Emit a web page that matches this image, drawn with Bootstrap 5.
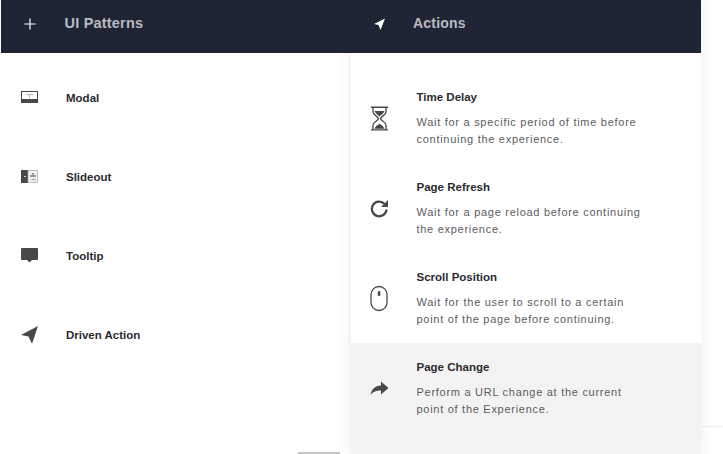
<!DOCTYPE html>
<html lang="en">
<head>
<meta charset="utf-8">
<title>Patterns and Actions</title>
<link href="https://cdn.jsdelivr.net/npm/bootstrap@5.3.0/dist/css/bootstrap.min.css" rel="stylesheet">
<style>
html,body{height:454px;overflow:hidden;background:#fff;}
body{font-family:"Liberation Sans",Arial,sans-serif;position:relative;}
.stage{height:454px;padding-left:1px;width:701px;}
.pane{width:350px;height:454px;}
.pane-right{box-shadow:-1px 0 0 #f2f2f2,0 0 18px rgba(0,0,0,.07);position:relative;z-index:1;}
.pane-left .pane-head{position:relative;z-index:2;}
.pane-head{height:53px;padding-bottom:6px;background:#1f2535;color:#b9bbc1;font-size:14.5px;font-weight:700;letter-spacing:.2px;}
.pane-head .ico{width:28px;height:14px;margin-left:21.5px;color:#fff;}
.pane-head .ttl{margin-left:14px;}
.pane-right .pane-head .ico{margin-left:21.5px;}
.pane-right .pane-head .ttl{margin-left:12.5px;font-size:14px;}
.plist{padding-top:5px;}
.pitem{height:79px;padding-left:20px;color:#2b2b2e;font-size:11.5px;font-weight:700;}
.pitem svg{width:17px;height:17px;color:#48484b;flex:none;}
.pitem span{margin-left:28px;margin-top:3px;}
.alist{padding-top:21px;}
.aitem{height:90px;padding-left:19px;}
.aitem.on{background:#f3f3f3;height:111px;margin-top:-1px;padding-top:1px;}
.aitem svg{width:20px;height:30px;color:#48484b;flex:none;margin-top:29px;}
.acopy{margin-left:26.5px;padding-top:17px;}
.acopy h6{margin:0 0 10px;font-size:11.5px;line-height:13px;font-weight:700;color:#2b2b2e;}
.acopy p{margin:0;font-size:11px;line-height:17px;color:#5c5c60;letter-spacing:.72px;}
.edge-tab{position:absolute;left:298px;bottom:0;width:42px;height:2px;background:#c4c4c4;}
.edge-line{position:absolute;left:701px;top:426px;width:22px;height:1px;background:#efefef;}
</style>
</head>
<body>
<div class="stage d-flex">
  <section class="pane pane-left">
    <header class="pane-head d-flex align-items-center">
      <svg class="ico" viewBox="0 0 28 14"><path d="M7 1.500v11M1.500 7h11" stroke="currentColor" stroke-width="1.200" fill="none"/></svg>
      <span class="ttl">UI Patterns</span>
    </header>
    <div class="plist">
      <div class="pitem d-flex align-items-center">
        <svg viewBox="0 0 17 17"><rect x=".5" y="2.500" width="16" height="11" fill="#fff" stroke="currentColor"/><rect y="10" width="17" height="4" fill="currentColor"/><path d="M5 5h7v1H5zM8 6h1v3H8z" fill="#b5b5b5"/></svg>
        <span>Modal</span>
      </div>
      <div class="pitem d-flex align-items-center">
        <svg viewBox="0 0 17 17"><rect y="2" width="7" height="13" fill="currentColor"/><rect x="7" y="2.500" width="9.500" height="12" fill="#efefef" stroke="#aaa" stroke-width=".7"/><path d="M9 7h6v2H9zM10.500 11h4v1h-4zM11 5h2v2h-2z" fill="#999"/><path d="M3 8h2v1H3z" fill="#ccc"/></svg>
        <span>Slideout</span>
      </div>
      <div class="pitem d-flex align-items-center">
        <svg viewBox="0 0 17 17"><path d="M1 1h15a1 1 0 0 1 1 1v10a1 1 0 0 1-1 1h-5l-2.500 2.500L6 13H1a1 1 0 0 1-1-1V2a1 1 0 0 1 1-1z" fill="currentColor"/></svg>
        <span>Tooltip</span>
      </div>
      <div class="pitem d-flex align-items-center">
        <svg viewBox="0 0 17 17"><path d="M17 0 0 9l7.500 1.500L11 18z" fill="currentColor"/></svg>
        <span>Driven Action</span>
      </div>
    </div>
  </section>
  <section class="pane pane-right">
    <header class="pane-head d-flex align-items-center">
      <svg class="ico" viewBox="0 0 28 14"><path d="M12 1.500 1 7l4.500 1L7.500 13z" fill="currentColor"/></svg>
      <span class="ttl">Actions</span>
    </header>
    <div class="alist">
      <div class="aitem d-flex">
        <svg viewBox="0 0 20 30"><g transform="translate(0 1.500) scale(1 1.080)"><path d="M1 2.500h17M1 23.500h17M3 3v4c0 2.500 5 4 5.500 6C8 15 3 16.500 3 19v4M16 3v4c0 2.500-5 4-5.500 6 .5 2 5.500 3.500 5.500 6v4" fill="none" stroke="currentColor" stroke-width="1.300"/><path d="M4.500 6h10c-.5 2-3.500 3.500-5 5C8 9.500 5 8 4.500 6zM4.500 22.500c1-2.500 3.500-4 5-4.500 1.500.5 4 2 5 4.500z" fill="currentColor"/></g></svg>
        <div class="acopy"><h6>Time Delay</h6><p>Wait for a specific period of time before<br>continuing the experience.</p></div>
      </div>
      <div class="aitem d-flex">
        <svg viewBox="0 0 20 30"><path d="M14.600 11A7.300 7.300 0 1 0 16.500 16.500" fill="none" stroke="currentColor" stroke-width="2.300"/><path d="M18 7V14H11z" fill="currentColor"/></svg>
        <div class="acopy"><h6>Page Refresh</h6><p>Wait for a page reload before continuing<br>the experience.</p></div>
      </div>
      <div class="aitem d-flex">
        <svg viewBox="0 0 20 30"><rect x="1" y="3.500" width="16" height="24" rx="8" fill="none" stroke="currentColor" stroke-width="1.300"/><rect x="7.800" y="8" width="2.500" height="5" rx="1" fill="currentColor"/></svg>
        <div class="acopy"><h6>Scroll Position</h6><p>Wait for the user to scroll to a certain<br>point of the page before continuing.</p></div>
      </div>
      <div class="aitem on d-flex">
        <svg viewBox="0 0 20 30"><path transform="translate(-.5 3)" d="M11.500 5.500 19 12l-7.500 6.500V14.500C7 14.500 3.500 15.500 1 19c.8-5.500 4.500-9.300 10.500-9.500z" fill="currentColor"/></svg>
        <div class="acopy"><h6>Page Change</h6><p>Perform a URL change at the current<br>point of the Experience.</p></div>
      </div>
    </div>
  </section>
</div>
<div class="edge-tab"></div>
<div class="edge-line"></div>
</body>
</html>
